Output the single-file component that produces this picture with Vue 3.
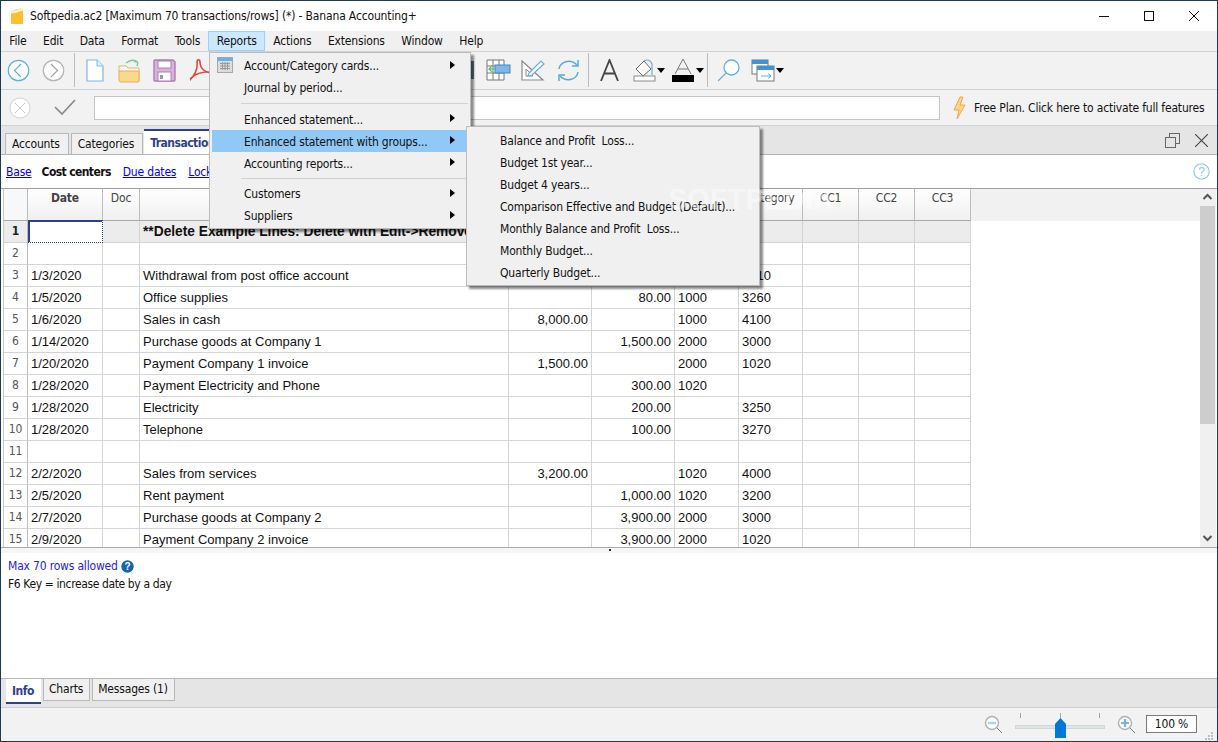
<template>
  <div class="window">
    <div class="titlebar">
      <svg class="app-icon" width="14" height="18" viewBox="0 0 14 18">
        <path d="M1 4.5 Q7 1 13 1.5 V16 Q13 17 12 17 H2 Q1 17 1 16 Z" fill="#fbc02d"/>
        <path d="M1 4.5 Q7 2 13 1 V3.5 Q7 6 1 6.5 Z" fill="#fff3c4"/>
      </svg>
      <span class="title">Softpedia.ac2 [Maximum 70 transactions/rows] (*) - Banana Accounting+</span>
      <div class="win-controls">
        <svg width="10" height="10" viewBox="0 0 10 10"><path d="M0 5.5H10" stroke="#111"/></svg>
        <svg width="10" height="10" viewBox="0 0 10 10"><rect x=".5" y=".5" width="9" height="9" fill="none" stroke="#111"/></svg>
        <svg width="10" height="10" viewBox="0 0 10 10"><path d="M0 0L10 10M10 0L0 10" stroke="#111"/></svg>
      </div>
    </div>

    <div class="menubar">
      <span v-for="m in menus" :key="m" class="menubar__item" :class="{ 'menubar__item--open': m === 'Reports' }">{{ m }}</span>
    </div>

    <div class="toolbar">
      <svg class="t-back" width="23" height="23" viewBox="0 0 23 23">
        <circle cx="11.5" cy="11.5" r="10.2" fill="#fff" stroke="#5fb0e0" stroke-width="1.2"/>
        <path d="M14 5L7.5 11.5L14 18" fill="none" stroke="#5fb0e0" stroke-width="1.1"/>
      </svg>
      <svg class="t-forward" width="23" height="23" viewBox="0 0 23 23">
        <circle cx="11.5" cy="11.5" r="10.2" fill="#fff" stroke="#b4b4b4" stroke-width="1.2"/>
        <path d="M9 5L15.5 11.5L9 18" fill="none" stroke="#a0a0a0" stroke-width="1.1"/>
      </svg>
      <i class="t-sep t-sep--first"></i>
      <svg class="t-doc" width="18" height="23" viewBox="0 0 18 23">
        <path d="M1 1H11L17 7V22H1Z" fill="#fff" stroke="#7ab8e6" stroke-width="1.2"/>
        <path d="M11 1V7H17" fill="#e4f1fb" stroke="#7ab8e6"/>
      </svg>
      <svg class="t-folder" width="23" height="25" viewBox="0 0 23 25">
        <path d="M8 5Q14 0 20 4M20 4L16 3.5M20 4L19 8" fill="none" stroke="#7cc9a0" stroke-width="1.4"/>
        <path d="M1 11V8H8L10 10H21V23H2Z" fill="#fff" stroke="#f0a860"/>
        <path d="M1 13H21V23Q21 24 20 24H3Q1 24 1 22Z" fill="#f9d98a" stroke="#f0a860"/>
      </svg>
      <svg class="t-save" width="23" height="23" viewBox="0 0 23 23">
        <path d="M1 2Q1 1 2 1H20L22 3V21Q22 22 21 22H2Q1 22 1 21Z" fill="#d9b3db" stroke="#ae7cb4" stroke-width="1.4"/>
        <rect x="5" y="2" width="13" height="7" fill="#fff" stroke="#ae7cb4"/>
        <rect x="5" y="13" width="13" height="9" fill="#fff" stroke="#ae7cb4"/>
        <rect x="7" y="16" width="3" height="4" fill="#9a9a9a"/>
      </svg>
      <svg class="t-pdf" width="24" height="23" viewBox="0 0 24 23">
        <path d="M1 20C5 18 9 10 8 3C8 0 11 0 11 3C11 9 16 14 23 14C20 12 12 13 6 16C3 18 1 21 2 21" fill="none" stroke="#e5403a" stroke-width="1.5"/>
      </svg>
      <svg class="t-cut" width="4" height="18" viewBox="0 0 4 18"><rect width="4" height="18" fill="#58748c"/></svg>
      <svg class="t-table" width="25" height="22" viewBox="0 0 25 22">
        <path d="M1 1H18V21H1ZM1 7H18M1 14H18M7 1V21M13 1V21" fill="#fff" stroke="#777"/>
        <rect x="9" y="6" width="15" height="8" fill="#7cb8e8" stroke="#3f87c8"/>
        <path d="M9 10H3M6 7L3 10L6 13" fill="none" stroke="#62c47c" stroke-width="1.3"/>
      </svg>
      <svg class="t-square" width="24" height="22" viewBox="0 0 24 22">
        <path d="M1 2L22 21H1Z" fill="#fff" stroke="#8a8a8a" stroke-width="1.2"/>
        <path d="M5 10L12 17H5Z" fill="#fff" stroke="#8a8a8a"/>
        <path d="M8 14L20 2L23 5L11 16L7 17Z" fill="#fff" stroke="#62aee6" stroke-width="1.2"/>
      </svg>
      <svg class="t-refresh" width="23" height="23" viewBox="0 0 23 23">
        <path d="M2 10C3 3 13 -1 20 6M21 13C20 20 10 24 3 17" fill="none" stroke="#5aa9dc" stroke-width="1.5"/>
        <path d="M21 1V7H15M2 22V16H8" fill="none" stroke="#5aa9dc" stroke-width="1.5"/>
      </svg>
      <i class="t-sep t-sep--second"></i>
      <svg class="t-a" width="19" height="22" viewBox="0 0 19 22">
        <path d="M1 22L9.5 1L18 22M4 14.5H15" fill="none" stroke="#444" stroke-width="1.8"/>
      </svg>
      <svg class="t-fill" width="23" height="24" viewBox="0 0 23 24">
        <rect x="1" y="18" width="21" height="5" fill="#fff" stroke="#8a8a8a"/>
        <path d="M3 11L11 3L18 11L10 18Z" fill="#fff" stroke="#666"/>
        <path d="M11 3Q17 0 19 6V17" fill="none" stroke="#62aee6" stroke-width="1.2"/>
      </svg>
      <i class="caret caret--fill"></i>
      <svg class="t-color" width="22" height="24" viewBox="0 0 22 24">
        <path d="M3 16L11 1L19 16M6 11H16" fill="none" stroke="#777" stroke-width="1"/>
        <rect y="17" width="22" height="7" fill="#000"/>
      </svg>
      <i class="caret caret--color"></i>
      <i class="t-sep t-sep--third"></i>
      <svg class="t-zoom" width="23" height="23" viewBox="0 0 23 23">
        <circle cx="14.5" cy="8.5" r="7.5" fill="#fff" stroke="#62aee6" stroke-width="1.3"/>
        <path d="M9 14L1 22" stroke="#62aee6" stroke-width="1.1"/>
      </svg>
      <svg class="t-windows" width="24" height="23" viewBox="0 0 24 23">
        <rect x="1" y="1" width="16" height="14" fill="#fff" stroke="#777"/>
        <rect x="1" y="1" width="16" height="4" fill="#3f93d8"/>
        <rect x="6" y="7" width="17" height="15" fill="#fff" stroke="#777"/>
        <rect x="6" y="7" width="17" height="4" fill="#3f93d8"/>
        <path d="M10 17H20M17 14.5L20 17L17 19.5" fill="none" stroke="#62aee6"/>
      </svg>
      <i class="caret caret--windows"></i>
    </div>

    <div class="formula">
      <svg class="f-cancel" width="22" height="22" viewBox="0 0 22 22">
        <circle cx="11" cy="11" r="10" fill="#fff" stroke="#d4d4d4"/>
        <path d="M6 6L16 16M16 6L6 16" stroke="#c8c8c8"/>
      </svg>
      <svg class="f-check" width="22" height="17" viewBox="0 0 22 17">
        <path d="M1 8L8 15L21 1" fill="none" stroke="#8a8a8a" stroke-width="1.7"/>
      </svg>
      <div class="f-input"></div>
      <svg class="f-bolt" width="13" height="24" viewBox="0 0 13 24">
        <path d="M7 1L1 14H6L4 23L12 9H7L10 1Z" fill="#fcd58c" stroke="#f2a54a"/>
      </svg>
      <span class="f-plan">Free Plan. Click here to activate full features</span>
    </div>

    <div class="tabs">
      <span class="tab">Accounts</span>
      <span class="tab">Categories</span>
      <span class="tab tab--active">Transactions</span>
      <div class="tabs__right">
        <svg width="15" height="15" viewBox="0 0 15 15">
          <rect x="4.5" y=".5" width="10" height="10" fill="#e5e5e5" stroke="#666"/>
          <rect x=".5" y="4.5" width="10" height="10" fill="#e5e5e5" stroke="#666"/>
        </svg>
        <svg width="13" height="13" viewBox="0 0 13 13"><path d="M0 0L13 13M13 0L0 13" stroke="#444" stroke-width="1.1"/></svg>
      </div>
    </div>

    <div class="views">
      <a class="view-link">Base</a>
      <b class="view-current">Cost centers</b>
      <a class="view-link">Due dates</a>
      <a class="view-link">Locked</a>
      <svg class="views__help" width="17" height="17" viewBox="0 0 17 17">
        <circle cx="8.5" cy="8.5" r="7.7" fill="#fff" stroke="#8cc4ea" stroke-width="1.1"/>
        <text x="8.5" y="12.8" text-anchor="middle" class="views__help-mark">?</text>
      </svg>
    </div>

    <div class="sheet">
      <div class="grid">
        <div class="grid__row grid__row--head">
          <div class="cell cell--corner"></div>
          <div v-for="h in headers" :key="h.key" class="cell cell--head" :class="{ 'cell--date': h.key === 'date' }">{{ h.label }}</div>
        </div>
        <div v-for="r in rows" :key="r.n" class="grid__row" :class="{ 'grid__row--note': r.n === 1 }">
          <div class="cell cell--num">{{ r.n }}</div>
          <div class="cell cell--txt" :class="{ 'cell--selected': r.n === 1 }">{{ r.date }}</div>
          <div class="cell"></div>
          <div class="cell cell--txt" :class="{ 'cell--note': r.n === 1 }">{{ r.desc }}</div>
          <div class="cell cell--amount">{{ r.income }}</div>
          <div class="cell cell--amount">{{ r.expense }}</div>
          <div class="cell cell--txt">{{ r.account }}</div>
          <div class="cell cell--txt">{{ r.category }}</div>
          <div class="cell"></div>
          <div class="cell"></div>
          <div class="cell"></div>
        </div>
      </div>
      <div class="scroll">
        <svg class="scroll__arrow" width="15" height="17" viewBox="0 0 15 17"><path d="M3.5 10L7.5 6L11.5 10" fill="none" stroke="#555" stroke-width="2"/></svg>
        <div class="scroll__thumb"></div>
        <div class="scroll__rest"></div>
        <svg class="scroll__arrow" width="15" height="17" viewBox="0 0 15 17"><path d="M3.5 6L7.5 10L11.5 6" fill="none" stroke="#555" stroke-width="2"/></svg>
      </div>
    </div>

    <div class="splitter"><i class="splitter__dot"></i></div>

    <div class="info">
      <div class="info__line">
        <span class="info__limit">Max 70 rows allowed</span>
        <svg width="13" height="13" viewBox="0 0 13 13">
          <circle cx="6.5" cy="6.5" r="6.2" fill="#1565a8"/>
          <text x="6.5" y="10.3" text-anchor="middle" class="info__mark">?</text>
        </svg>
      </div>
      <div class="info__line info__line--hint">F6 Key = increase date by a day</div>
    </div>

    <div class="bottom-tabs">
      <span class="btab btab--active">Info</span>
      <span class="btab">Charts</span>
      <span class="btab">Messages (1)</span>
    </div>

    <div class="status">
      <svg width="20" height="20" viewBox="0 0 20 20">
        <circle cx="8" cy="8" r="6.5" fill="#fff" stroke="#b0b0b0" stroke-width="1.4"/>
        <path d="M4 8H12" stroke="#a8d4ec" stroke-width="2.4"/>
        <path d="M13 13L18 18" stroke="#777"/>
      </svg>
      <div class="slider">
        <div class="slider__ticks"><i></i><i></i><i></i></div>
        <div class="slider__track"></div>
        <svg class="slider__thumb" width="11" height="20" viewBox="0 0 11 20"><path d="M0 6L5.5 0L11 6V20H0Z" fill="#0078d7"/></svg>
      </div>
      <svg width="20" height="20" viewBox="0 0 20 20">
        <circle cx="8" cy="8" r="6.5" fill="#fff" stroke="#b0b0b0" stroke-width="1.4"/>
        <path d="M4 8H12M8 4V12" stroke="#6fb6e6" stroke-width="2.2"/>
        <path d="M13 13L18 18" stroke="#777"/>
      </svg>
      <div class="zoom-box">100 %</div>
    </div>

    <svg class="grip" width="9" height="9" viewBox="0 0 9 9">
      <path d="M6 0h2v2H6zM3 3h2v2H3zM6 3h2v2H6zM0 6h2v2H0zM3 6h2v2H3zM6 6h2v2H6z" fill="#bdbdbd"/>
    </svg>

    <div class="menu menu--reports">
      <template v-for="item in reportItems" :key="item.label">
        <div v-if="item.sep" class="menu__sep"></div>
        <div class="menu__item" :class="{ 'menu__item--hover': item.hover }">
          <svg v-if="item.icon" class="menu__icon" width="16" height="16" viewBox="0 0 16 16">
            <rect x=".5" y=".5" width="15" height="15" fill="#dcdcdc" stroke="#a8a8a8"/>
            <rect x=".5" y=".5" width="15" height="3.5" fill="#6fb0e4"/>
            <path d="M3 6.5H13M3 9H13M3 11.5H13M5.5 5V13M8 5V13M10.5 5V13" stroke="#9a9a9a"/>
          </svg>
          <span>{{ item.label }}</span>
          <i v-if="item.sub" class="menu__arrow"></i>
        </div>
      </template>
    </div>

    <div class="menu menu--groups">
      <div v-for="item in groupItems" :key="item" class="menu__item menu__item--plain">{{ item }}</div>
    </div>

    <div class="watermark">SOFTPEDIA</div>
  </div>
</template>

<script setup>
const menus = ['File', 'Edit', 'Data', 'Format', 'Tools', 'Reports', 'Actions', 'Extensions', 'Window', 'Help']

const headers = [
  { key: 'date', label: 'Date' },
  { key: 'doc', label: 'Doc' },
  { key: 'desc', label: '' },
  { key: 'income', label: '' },
  { key: 'expense', label: '' },
  { key: 'account', label: '' },
  { key: 'category', label: 'Category' },
  { key: 'cc1', label: 'CC1' },
  { key: 'cc2', label: 'CC2' },
  { key: 'cc3', label: 'CC3' },
]

const row = (n, date = '', desc = '', income = '', expense = '', account = '', category = '') => ({
  n, date, desc, income, expense, account, category,
})

const rows = [
  row(1, '', '**Delete Example Lines: Delete with Edit->Remove'),
  row(2),
  row(3, '1/3/2020', 'Withdrawal from post office account', '', '', '', '1010'),
  row(4, '1/5/2020', 'Office supplies', '', '80.00', '1000', '3260'),
  row(5, '1/6/2020', 'Sales in cash', '8,000.00', '', '1000', '4100'),
  row(6, '1/14/2020', 'Purchase goods at Company 1', '', '1,500.00', '2000', '3000'),
  row(7, '1/20/2020', 'Payment Company 1 invoice', '1,500.00', '', '2000', '1020'),
  row(8, '1/28/2020', 'Payment Electricity and Phone', '', '300.00', '1020', ''),
  row(9, '1/28/2020', 'Electricity', '', '200.00', '', '3250'),
  row(10, '1/28/2020', 'Telephone', '', '100.00', '', '3270'),
  row(11),
  row(12, '2/2/2020', 'Sales from services', '3,200.00', '', '1020', '4000'),
  row(13, '2/5/2020', 'Rent payment', '', '1,000.00', '1020', '3200'),
  row(14, '2/7/2020', 'Purchase goods at Company 2', '', '3,900.00', '2000', '3000'),
  row(15, '2/9/2020', 'Payment Company 2 invoice', '', '3,900.00', '2000', '1020'),
]

const reportItems = [
  { label: 'Account/Category cards...', sub: true, icon: true },
  { label: 'Journal by period...' },
  { label: 'Enhanced statement...', sub: true, sep: true },
  { label: 'Enhanced statement with groups...', sub: true, hover: true },
  { label: 'Accounting reports...', sub: true },
  { label: 'Customers', sub: true, sep: true },
  { label: 'Suppliers', sub: true },
]

const groupItems = [
  'Balance and Profit  Loss...',
  'Budget 1st year...',
  'Budget 4 years...',
  'Comparison Effective and Budget (Default)...',
  'Monthly Balance and Profit  Loss...',
  'Monthly Budget...',
  'Quarterly Budget...',
]
</script>

<style>
html, body {
  margin: 0;
  background: #fff;
}
</style>

<style scoped>
.window {
  position: relative;
  box-sizing: border-box;
  width: 1218px;
  height: 742px;
  display: flex;
  flex-direction: column;
  overflow: hidden;
  border: 1px solid #1c3a54;
  background: #f0f0f0;
  color: #111;
  font: 12px "DejaVu Sans Condensed", "DejaVu Sans", sans-serif;
  letter-spacing: -0.18px;
}

.titlebar {
  flex: 0 0 30px;
  display: flex;
  align-items: center;
  padding-left: 9px;
  background: #fff;
}

.title {
  margin-left: 6px;
  white-space: pre;
  letter-spacing: -0.15px;
}

.win-controls {
  margin-left: auto;
  display: flex;
  gap: 35px;
  padding-right: 18px;
}

.menubar {
  flex: 0 0 20px;
  display: flex;
  border-bottom: 1px solid #d2d2d2;
}

.menubar__item {
  box-sizing: border-box;
  height: 20px;
  line-height: 20px;
  padding: 0 8.25px;
}

.menubar__item--open {
  background: #cce8ff;
  outline: 1px solid #99d1ff;
  outline-offset: -1px;
}

.toolbar {
  flex: 0 0 36px;
  display: flex;
  align-items: center;
  padding-bottom: 1px;
  background: #f2f2f2;
  border-bottom: 1px solid #d2d2d2;
}

.t-sep {
  width: 1px;
  height: 34px;
  background: #bcbcbc;
}

.t-back { margin-left: 6px; }
.t-forward { margin-left: 12px; }
.t-sep--first { margin-left: 9px; }
.t-doc { margin-left: 11px; }
.t-folder { margin-left: 14px; }
.t-save { margin-left: 12px; }
.t-pdf { margin-left: 13px; }
.t-cut { margin-left: 257px; }
.t-table { margin-left: 12px; }
.t-square { margin-left: 10px; }
.t-refresh { margin-left: 12px; }
.t-sep--second { margin-left: 8px; }
.t-a { margin-left: 11px; }
.t-fill { margin-left: 14px; }
.t-color { margin-left: 7px; }
.t-sep--third { margin-left: 3px; }
.t-zoom { margin-left: 9px; }
.t-windows { margin-left: 11px; }

.caret {
  width: 0;
  height: 0;
  border-left: 4.5px solid transparent;
  border-right: 4.5px solid transparent;
  border-top: 5px solid #000;
}

.caret--fill { margin-left: 1px; }
.caret--color { margin-left: 2px; }
.caret--windows { margin-left: 1px; }

.formula {
  flex: 0 0 35px;
  display: flex;
  align-items: center;
  background: #f2f2f2;
  border-bottom: 1px solid #d2d2d2;
}

.f-cancel { margin-left: 8px; }
.f-check { margin-left: 23px; }

.f-input {
  box-sizing: border-box;
  width: 846px;
  height: 24px;
  margin-left: 18px;
  background: #fff;
  border: 1px solid #c4c4c4;
}

.f-bolt { margin-left: 13px; }

.f-plan {
  margin-left: 8px;
  white-space: nowrap;
}

.tabs {
  flex: 0 0 28px;
  display: flex;
  align-items: flex-end;
  padding-left: 4px;
  gap: 2px;
  background: #e5e5e5;
  border-bottom: 1px solid #b4b4b4;
}

.tab {
  box-sizing: border-box;
  height: 21px;
  line-height: 20px;
  padding: 0 8px 0 6px;
  background: #f0f0f0;
  border: 1px solid #b8b8b8;
  border-bottom: 0;
}

.tab--active {
  height: 25px;
  width: 110px;
  line-height: 24px;
  padding: 0 0 0 6px;
  background: #fff;
  border: 0;
  border-top: 2px solid #2f3f8f;
  color: #2f3f8f;
  font-weight: bold;
  margin-left: -1px;
  letter-spacing: -0.5px;
}

.tabs__right {
  margin-left: auto;
  align-self: center;
  display: flex;
  align-items: center;
  gap: 15px;
  padding-right: 9px;
}

.views {
  flex: 0 0 33px;
  display: flex;
  align-items: center;
  padding-left: 5px;
  background: #fff;
}

.view-link {
  margin-right: 12px;
  color: #0000ee;
  text-decoration: underline;
}

.view-link:first-child {
  margin-right: 10px;
}

.view-current {
  margin-right: 12px;
  color: #111;
  letter-spacing: -0.6px;
}

.views__help {
  margin-left: auto;
  margin-right: 7px;
}

.views__help-mark {
  font: 12px "Liberation Sans", sans-serif;
  fill: #8cc4ea;
}

.sheet {
  flex: 0 0 358px;
  display: flex;
  background: #fff;
  border-top: 1px solid #a0a0a0;
  overflow: hidden;
}

.grid {
  flex: 1;
  padding-left: 2px;
  min-width: 0;
  overflow: hidden;
}

.grid__row {
  display: grid;
  grid-template-columns: 25px 75px 37px 369px 83px 83px 64px 64px 56px 56px 56px;
  height: 22px;
  letter-spacing: 0;
}

.grid__row--head {
  height: 32px;
  background: #f1f1f1;
}

.grid__row--note .cell {
  background: #ececec;
}

.cell {
  box-sizing: border-box;
  min-width: 0;
  padding: 0 3px;
  white-space: nowrap;
  border-right: 1px solid #d4d4d4;
  border-bottom: 1px solid #d4d4d4;
  font: 13px/21px "Liberation Sans", Arial, sans-serif;
}

.cell--corner,
.cell--head {
  background: linear-gradient(#fff, #f0f0f0);
  border-right: 1px solid #bcbcbc;
  border-bottom: 1px solid #a8a8a8;
}

.cell--corner {
  background: #f6f8fa;
  border-left: 1px solid #c8c8c8;
}

.cell--head {
  text-align: center;
  color: #444;
  letter-spacing: -0.18px;
  font: 12px/19px "DejaVu Sans Condensed", "DejaVu Sans", sans-serif;
}

.cell--date {
  font-weight: bold;
}

.cell--num {
  padding: 0;
  text-align: center;
  color: #555;
  border-left: 1px solid #c8c8c8;
  border-right: 1px solid #bcbcbc;
  font: 12px/21px "DejaVu Sans Condensed", "DejaVu Sans", sans-serif;
}

.grid__row--note .cell--num {
  color: #222;
  font-weight: bold;
}

.cell--amount {
  text-align: right;
}

.cell--selected {
  margin-top: -1px;
  height: 23px;
  background: #fff !important;
  border: 2px solid #2f3f8f;
  border-right: 1px dotted #2f3f8f;
  border-bottom: 1px dotted #2f3f8f;
}

.cell--note {
  font-weight: bold;
  font-size: 13.75px;
}

.scroll {
  flex: 0 0 16px;
  margin-right: 1px;
  display: flex;
  flex-direction: column;
  background: #f0f0f0;
}

.scroll__arrow {
  flex: none;
}

.scroll__thumb {
  flex: 0 0 218px;
  width: 15px;
  background: #cdcdcd;
}

.scroll__rest {
  flex: 1;
}

.splitter {
  position: relative;
  flex: 0 0 6px;
  box-sizing: border-box;
  background: #f6f6f6;
  border-top: 1px solid #a8a8a8;
}

.splitter__dot {
  position: absolute;
  left: 608px;
  top: 1px;
  width: 2px;
  height: 2px;
  background: #333;
}

.info {
  flex: 0 0 125px;
  box-sizing: border-box;
  padding: 4px 7px;
  background: #fff;
}

.info__line {
  display: flex;
  align-items: center;
  gap: 3px;
  height: 18px;
}

.info__line--hint {
  letter-spacing: -0.38px;
}

.info__limit {
  color: #2222ee;
}

.info__mark {
  font: bold 10px "Liberation Sans", sans-serif;
  fill: #fff;
}

.bottom-tabs {
  flex: 0 0 30px;
  box-sizing: border-box;
  display: flex;
  align-items: flex-start;
  gap: 2px;
  padding-left: 5px;
  background: #e5e5e5;
  border-top: 1px solid #b8b8b8;
  border-bottom: 1px solid #cfcfcf;
}

.btab {
  box-sizing: border-box;
  height: 22px;
  line-height: 20px;
  padding: 0 6px 0 5px;
  background: #f0f0f0;
  border: 1px solid #b8b8b8;
  border-top: 0;
}

.btab--active {
  width: 35px;
  height: 25px;
  line-height: 24px;
  padding-left: 6px;
  background: #fff;
  border: 0;
  border-bottom: 2px solid #2f3f8f;
  color: #2f3f8f;
  font-weight: bold;
  letter-spacing: -0.5px;
}

.status {
  flex: 1;
  display: flex;
  align-items: center;
  justify-content: flex-end;
  padding-right: 20px;
  background: #f2f2f2;
}

.slider {
  position: relative;
  width: 90px;
  height: 24px;
  margin: 0 12px 0 11px;
}

.slider__ticks {
  display: flex;
  justify-content: space-between;
  padding: 0 5px;
}

.slider__ticks i {
  width: 1px;
  height: 5px;
  background: #a8a890;
}

.slider__track {
  position: absolute;
  left: 0;
  right: 0;
  top: 12px;
  border: 1px solid #d2d6d6;
  height: 2px;
  background: #dfe4e4;
}

.slider__thumb {
  position: absolute;
  left: 40px;
  top: 5px;
}

.zoom-box {
  box-sizing: border-box;
  width: 51px;
  height: 18px;
  margin-left: 9px;
  margin-bottom: 2px;
  text-align: center;
  line-height: 16px;
  background: #fff;
  border: 1px solid #7a7a7a;
}

.grip {
  position: absolute;
  right: 3px;
  bottom: 0;
}

.menu {
  position: absolute;
  z-index: 5;
  box-sizing: border-box;
  background: #f0f0f0;
  border: 1px solid #bcbcbc;
  box-shadow: 3px 3px 2px rgba(0, 0, 0, 0.45);
}

.menu--reports {
  left: 208px;
  top: 51px;
  width: 262px;
  height: 177px;
  padding: 2px;
}

.menu--groups {
  left: 465px;
  top: 125px;
  width: 294px;
  height: 160px;
  padding: 2px;
}

.menu__item {
  position: relative;
  display: flex;
  align-items: center;
  height: 22px;
  padding: 1px 0 0 32px;
  box-sizing: border-box;
  white-space: pre;
}

.menu--reports .menu__item:nth-child(-n+2),
.menu--reports .menu__item:nth-child(n+8) {
  padding-top: 0;
}

.menu__item--plain {
  padding-left: 31px;
}

.menu__item--hover {
  background: #90c8f6;
}

.menu__icon {
  position: absolute;
  left: 5px;
  top: 2px;
}

.menu__arrow {
  position: absolute;
  right: 13px;
  top: 6px;
  width: 0;
  height: 0;
  border-top: 4px solid transparent;
  border-bottom: 4px solid transparent;
  border-left: 5px solid #000;
}

.menu__sep {
  height: 1px;
  margin: 4px 0 4px 29px;
  background: #d2d2d2;
}

.watermark {
  position: absolute;
  z-index: 6;
  left: 667px;
  top: 183px;
  color: rgba(255, 255, 255, 0.45);
  font: bold 29px/30px "Liberation Sans", sans-serif;
  letter-spacing: 0;
}
</style>
